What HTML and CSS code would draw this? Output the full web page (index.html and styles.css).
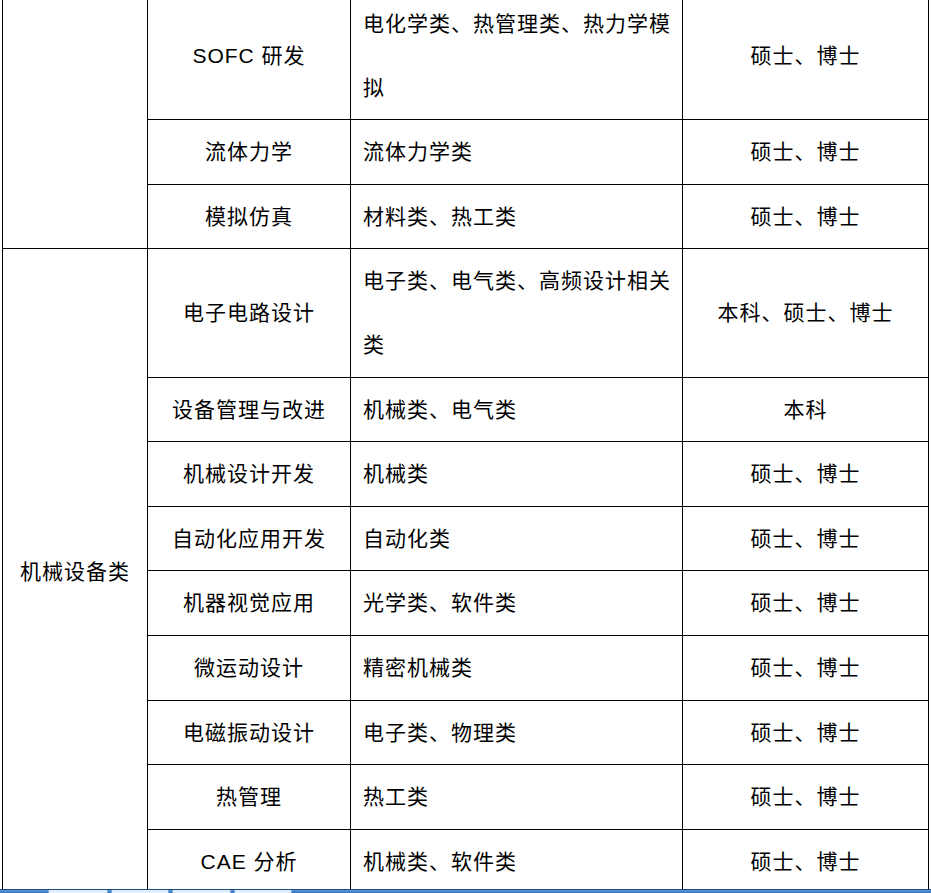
FILE: index.html
```html
<!DOCTYPE html>
<html lang="zh-CN">
<head>
<meta charset="utf-8">
<title>岗位需求表</title>
<link rel="stylesheet" href="styles.css">
</head>
<body>
<table class="grid">
  <colgroup>
    <col class="c1"><col class="c2"><col class="c3"><col class="c4">
  </colgroup>
  <tbody>
    <tr>
      <td class="cat" rowspan="3"></td>
      <td class="pos">SOFC 研发</td>
      <td class="major">电化学类、热管理类、热力学模拟</td>
      <td class="deg">硕士、博士</td>
    </tr>
    <tr>
      <td class="pos">流体力学</td>
      <td class="major">流体力学类</td>
      <td class="deg">硕士、博士</td>
    </tr>
    <tr>
      <td class="pos">模拟仿真</td>
      <td class="major">材料类、热工类</td>
      <td class="deg">硕士、博士</td>
    </tr>
    <tr>
      <td class="cat" rowspan="10">机械设备类</td>
      <td class="pos">电子电路设计</td>
      <td class="major">电子类、电气类、高频设计相关类</td>
      <td class="deg">本科、硕士、博士</td>
    </tr>
    <tr>
      <td class="pos">设备管理与改进</td>
      <td class="major">机械类、电气类</td>
      <td class="deg">本科</td>
    </tr>
    <tr>
      <td class="pos">机械设计开发</td>
      <td class="major">机械类</td>
      <td class="deg">硕士、博士</td>
    </tr>
    <tr>
      <td class="pos">自动化应用开发</td>
      <td class="major">自动化类</td>
      <td class="deg">硕士、博士</td>
    </tr>
    <tr>
      <td class="pos">机器视觉应用</td>
      <td class="major">光学类、软件类</td>
      <td class="deg">硕士、博士</td>
    </tr>
    <tr>
      <td class="pos">微运动设计</td>
      <td class="major">精密机械类</td>
      <td class="deg">硕士、博士</td>
    </tr>
    <tr>
      <td class="pos">电磁振动设计</td>
      <td class="major">电子类、物理类</td>
      <td class="deg">硕士、博士</td>
    </tr>
    <tr>
      <td class="pos">热管理</td>
      <td class="major">热工类</td>
      <td class="deg">硕士、博士</td>
    </tr>
    <tr>
      <td class="pos">CAE 分析</td>
      <td class="major">机械类、软件类</td>
      <td class="deg">硕士、博士</td>
    </tr>
  </tbody>
</table>
<div class="tabbar">
  <span class="tab t1"></span>
  <span class="tab t2"></span>
  <span class="tab t3"></span>
  <span class="tab t4"></span>
</div>
</body>
</html>
```

FILE: styles.css
```css
html, body {
  margin: 0;
  padding: 0;
  overflow: hidden;
  background: #ffffff;
}

body {
  font-family: "Liberation Sans", "Noto Sans CJK SC", sans-serif;
  font-size: 21px;
  letter-spacing: 1px;
  color: #000000;
}

.grid {
  border-collapse: collapse;
  table-layout: fixed;
  width: 927px;
  margin: -9px 0 0 2px;
}

.c1 { width: 145px; }
.c2 { width: 203px; }
.c3 { width: 332px; }
.c4 { width: 246px; }

.grid td {
  border: 1px solid #000000;
  padding: 0;
  line-height: 63.6px;
  vertical-align: middle;
}

.cat,
.pos,
.deg {
  text-align: center;
}

.major {
  text-align: left;
  padding-left: 12px !important;
  padding-right: 6px !important;
}

.tabbar {
  position: fixed;
  left: 0;
  right: 0;
  bottom: 0;
  height: 3px;
  border-top: 1px solid #1d4f86;
  background: linear-gradient(#5b95d6, #3a76bf);
  display: flex;
}

.tab {
  height: 3px;
  background: #e4eefa;
  border-left: 1px solid #7fa6d6;
  border-right: 1px solid #7fa6d6;
}

.t1 { margin-left: 48px; width: 58px; }
.t2 { margin-left: 3px; width: 56px; }
.t3 { margin-left: 3px; width: 57px; }
.t4 { margin-left: 3px; width: 56px; }
```
